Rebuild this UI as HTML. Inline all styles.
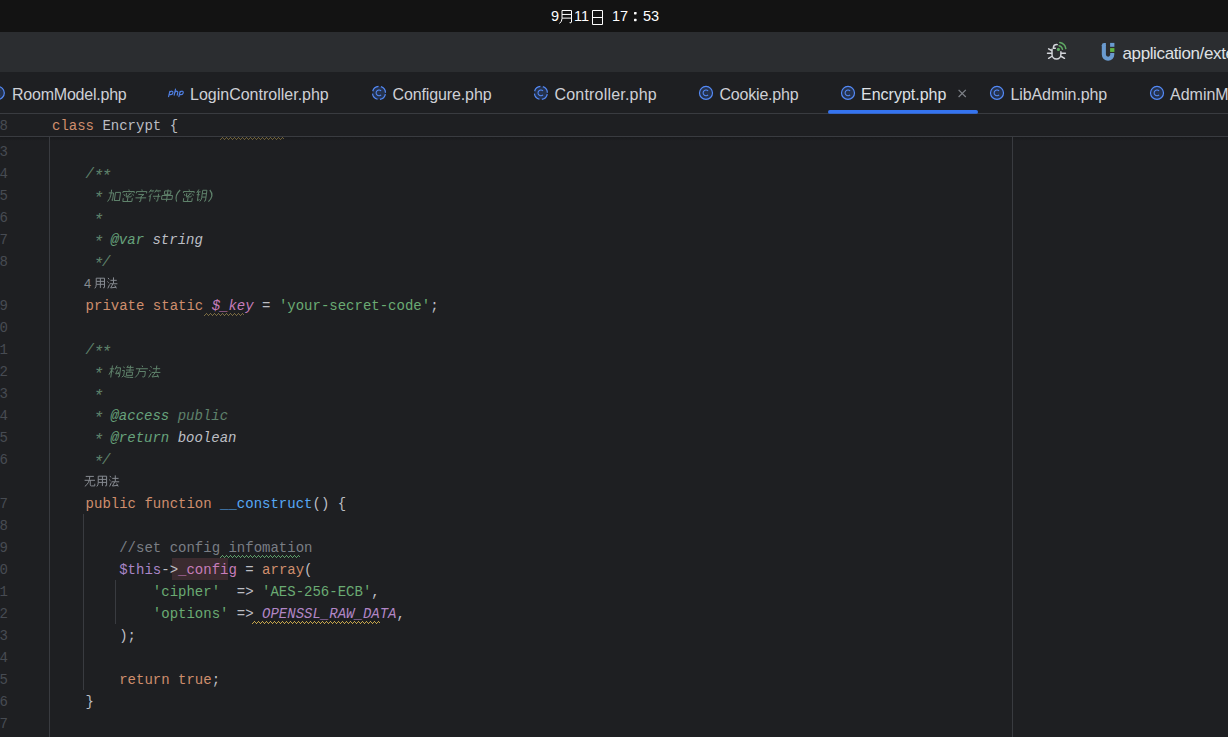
<!DOCTYPE html>
<html><head><meta charset="utf-8">
<style>
*{margin:0;padding:0;box-sizing:border-box}
html,body{width:1228px;height:737px;overflow:hidden;background:#1E1F22}
body{position:relative;font-family:"Liberation Sans",sans-serif}
.abs{position:absolute}
.cg{position:absolute;overflow:visible}
#topbar{left:0;top:0;width:1228px;height:32px;background:#131313}
.clk{position:absolute;top:6px;font-size:14.5px;line-height:20px;color:#FFFFFF;white-space:nowrap}
#toolbar{left:0;top:32px;width:1228px;height:40px;background:#2B2D30}
#tabs{left:0;top:72px;width:1228px;height:42px;background:#1E1F22;border-bottom:1px solid #393B40}
.tab{position:absolute;top:15px;font-size:16px;line-height:16px;color:#CED0D6;white-space:nowrap}
.tab.sel{color:#DFE1E5}
#sticky{left:0;top:114px;width:1228px;height:23px;border-bottom:1px solid #393B40;background:#1E1F22}
.code{font-family:"Liberation Mono",monospace;font-size:14px;line-height:22px;color:#BCBEC4;white-space:pre}
.row{position:absolute;left:0;height:22px;width:1228px}
.ln{position:absolute;left:-0.5px;top:1px;width:8px;color:#474B52}
.tx{position:absolute;left:52px;top:1px}
.k{color:#CF8E6D}.s{color:#6AAB73}.dc{color:#5F826B;font-style:italic}.dt{color:#67A37C;font-style:italic}
.dv{color:#BCBEC4;font-style:italic}.lc{color:#7A7E85}.fn{color:#56A8F5}.pv{color:#C77DBB}.pth{color:#A986C8}.pci{color:#B286C6;font-style:italic}.pvi{color:#C77DBB;font-style:italic}
.ast{display:inline-block;width:8px;transform:translateY(2.5px) scale(1.2)}
.guide{position:absolute;width:1px;background:#393B40}
.inl{position:absolute;font-family:"Liberation Sans",sans-serif;font-size:13px;line-height:22px;color:#868A91}
</style></head><body>
<svg width="0" height="0" style="position:absolute"><defs><g id="g52a0"><path d="M6,30 H42 V86 L34,82 M24,6 V46 Q22,74 6,94 M56,26 V90 M56,26 H94 V90 M56,86 H94" vector-effect="non-scaling-stroke"/></g><g id="g5bc6"><path d="M49,0 L53,10 M10,28 V16 H90 V28 M18,36 L26,50 M36,28 V52 Q36,58 44,58 H70 L74,48 M72,26 L38,60 M54,30 L58,38 M80,34 L88,48 M18,68 V94 H82 V68 M50,62 V94" vector-effect="non-scaling-stroke"/></g><g id="g5b57"><path d="M49,0 L53,10 M8,30 V16 H92 V30 M26,38 H72 L52,52 M52,50 V90 Q52,96 40,92 M6,64 H94" vector-effect="non-scaling-stroke"/></g><g id="g7b26"><path d="M20,2 L8,26 M14,13 H44 M28,16 L34,24 M62,2 L50,26 M56,13 H94 M72,16 L78,24 M30,34 L10,62 M21,50 V98 M40,56 H96 M80,36 V92 Q80,98 68,94 M52,68 L60,80" vector-effect="non-scaling-stroke"/></g><g id="g4e32"><path d="M26,12 V40 H74 V12 Z M10,50 V82 H90 V50 Z M50,0 V100" vector-effect="non-scaling-stroke"/></g><g id="g94a5"><path d="M22,4 L8,30 M12,22 H40 M10,44 H36 M23,24 V90 L40,80 M56,10 V66 Q56,86 44,96 M56,10 H92 V90 Q92,96 80,92 M56,36 H92 M56,62 H92" vector-effect="non-scaling-stroke"/></g><g id="g6784"><path d="M4,30 H40 M22,4 V98 M22,36 L4,76 M24,42 L40,58 M60,4 L48,36 M55,22 H92 V88 Q92,96 80,92 M70,36 L58,70 L84,66 M76,54 L86,74" vector-effect="non-scaling-stroke"/></g><g id="g9020"><path d="M10,12 L20,24 M4,42 H22 V78 L8,92 M22,82 Q34,94 98,94 M46,4 L38,22 M40,18 H90 M34,38 H96 M65,4 V50 M42,54 V80 M42,54 H88 V80 M42,78 H88" vector-effect="non-scaling-stroke"/></g><g id="g65b9"><path d="M48,0 L54,12 M4,26 H96 M34,26 Q34,76 8,96 M32,48 H80 V86 Q80,96 62,90" vector-effect="non-scaling-stroke"/></g><g id="g6cd5"><path d="M10,8 L20,20 M4,38 L16,48 M8,94 L24,62 M32,28 H90 M60,4 V54 M26,56 H96 M54,58 L34,90 L86,84 M72,70 L86,94" vector-effect="non-scaling-stroke"/></g><g id="g7528"><path d="M18,8 V64 Q18,86 6,98 M18,8 H88 V88 Q88,96 76,92 M18,36 H88 M18,62 H88 M53,8 V94" vector-effect="non-scaling-stroke"/></g><g id="g65e0"><path d="M14,14 H86 M4,46 H96 M50,14 Q48,70 6,96 M54,46 V84 Q54,92 64,92 H94 V74" vector-effect="non-scaling-stroke"/></g><g id="g6708"><path d="M24,6 V62 Q24,84 8,98 M24,6 H84 V88 Q84,96 72,92 M24,34 H84 M24,60 H84" vector-effect="non-scaling-stroke"/></g><g id="g65e5"><path d="M18,6 V94 M18,6 H82 V94 M18,50 H82 M18,94 H82" vector-effect="non-scaling-stroke"/></g></defs></svg>
<div id="topbar" class="abs">
  <div class="clk" style="left:551px">9</div>
  <div class="clk" style="left:574px">11</div>
  <div class="clk" style="left:612px">17</div>
  <svg class="abs" style="left:630px;top:8px" width="10" height="16" viewBox="630 8 10 16"><rect x="634" y="12" width="2.6" height="2.4" rx="0.6" fill="#fff"/><rect x="634" y="18.8" width="2.6" height="2.4" rx="0.6" fill="#fff"/></svg>
  <div class="clk" style="left:643px">53</div>
</div>
<div id="toolbar" class="abs">
  <svg class="abs" style="left:1040px;top:0" width="188" height="40" viewBox="1040 32 188 40">
    <g fill="none" stroke="#D5D7DC" stroke-width="1.45" stroke-linecap="round">
      <path d="M1052,49.2 V54.6 A4.45,4.45 0 0 0 1060.9,54.6 V51.6"/>
      <path d="M1057.3,44.6 C1055,44.5 1053.5,45.6 1053.4,47.4 V48.3 H1055.3"/>
      <path d="M1048.6,48.8 L1051.6,50.5 M1047.5,53.3 H1051.6 M1048.6,58.3 L1051.6,56.5 M1061.4,53.3 H1065.4 M1061.4,56.5 L1064.5,58.3"/>
    </g>
    <circle cx="1058.4" cy="49.4" r="1.6" fill="#5FA863"/>
    <g fill="none" stroke="#5FA863" stroke-width="1.5" stroke-linecap="round">
      <path d="M1059.1,45.7 A4.4,4.4 0 0 1 1062.5,49.3"/>
      <path d="M1059.8,42.6 A7.4,7.4 0 0 1 1065.8,48.6"/>
    </g>
    <path d="M1103.85,45 V54.55 A4.2,4.2 0 0 0 1112.25,54.55 V53" fill="none" stroke="#6A9BD0" stroke-width="4.1"/>
    <path d="M1101.8,45.2 Q1101.8,42.9 1104.2,42.9 H1105.9 V46 H1101.8 Z" fill="#6A9BD0"/>
    <rect x="1110.1" y="42.9" width="4.3" height="3.9" fill="#6A9BD0"/>
    <rect x="1110.1" y="48.1" width="4.3" height="3.8" fill="#62B543"/>
  </svg>
  <div class="abs" style="left:1122.5px;top:13.5px;font-size:17px;line-height:16px;letter-spacing:-0.38px;color:#DFE1E5;white-space:nowrap">application/extend</div>
</div>
<div id="tabs" class="abs">
  <svg class="abs" style="left:0;top:0" width="1228" height="42" viewBox="0 72 1228 42">
    <defs>
      <g id="cls"><circle r="6.5" fill="#25324D" stroke="#548AF7" stroke-width="1.2"/><path d="M2.1,-1.9 A2.85,2.85 0 1 0 2.1,1.9" fill="none" stroke="#548AF7" stroke-width="1.05"/></g>
      <g id="clsd"><circle r="6.5" fill="#25324D" stroke="#548AF7" stroke-width="1.2" stroke-dasharray="7.7 2.5" stroke-dashoffset="-1.25"/><path d="M2.1,-1.9 A2.85,2.85 0 1 0 2.1,1.9" fill="none" stroke="#548AF7" stroke-width="1.05"/></g>
    </defs>
    <use href="#cls" x="-2.2" y="92.9"/>
    <use href="#clsd" x="379" y="92.9"/>
    <use href="#clsd" x="540.9" y="92.9"/>
    <use href="#cls" x="706" y="92.9"/>
    <use href="#cls" x="848" y="92.9"/>
    <use href="#cls" x="997" y="92.9"/>
    <use href="#cls" x="1157" y="92.9"/>
    <path d="M958.6,89.8 L965.8,97 M965.8,89.8 L958.6,97" stroke="#7E8188" stroke-width="1.2"/>
    <rect x="828" y="110" width="150" height="3.8" rx="1.9" fill="#3574F0"/>
  </svg>
  <svg class="abs" style="left:160px;top:12px" width="30" height="20" viewBox="160 84 30 20"><g fill="none" stroke="#4F7FE3" stroke-width="1.15" stroke-linecap="round">
<path d="M169.8,91.3 L168.6,96.6 M169.5,92.6 Q170.6,91.1 172,91.2 Q173.2,91.4 172.9,92.8 Q172.5,94.7 170.6,94.6 Q169.6,94.5 169.2,94.1"/>
<path d="M175.5,89.1 L174.2,95.2 M174.9,92.4 Q175.9,91.1 177.1,91.2 Q178,91.4 177.8,92.4 L177.2,95.2"/>
<path d="M180.1,91.3 L178.9,96.6 M179.8,92.6 Q180.9,91.1 182.3,91.2 Q183.5,91.4 183.2,92.8 Q182.8,94.7 180.9,94.6 Q179.9,94.5 179.5,94.1"/>
</g></svg>
  <div class="tab" style="left:12px;letter-spacing:-0.22px">RoomModel.php</div>
  <div class="tab" style="left:190px">LoginController.php</div>
  <div class="tab" style="left:392.5px;letter-spacing:-0.12px">Configure.php</div>
  <div class="tab" style="left:554.5px;letter-spacing:0.2px">Controller.php</div>
  <div class="tab" style="left:719.5px;letter-spacing:-0.2px">Cookie.php</div>
  <div class="tab sel" style="left:861px">Encrypt.php</div>
  <div class="tab" style="left:1010.5px;letter-spacing:-0.1px">LibAdmin.php</div>
  <div class="tab" style="left:1170px">AdminModel.php</div>
</div>
<div id="sticky" class="abs code">
  <div class="ln" style="top:1px">8</div>
  <div class="tx" style="top:1px"><span class="k">class</span> Encrypt {</div>
</div>
<div class="abs" style="left:0;top:137px;width:1228px;height:4px;background:linear-gradient(#191A1D,#1E1F22)"></div>
<div class="guide" style="left:49px;top:137px;height:600px"></div>
<div class="guide" style="left:83px;top:514px;height:176px"></div>
<div class="guide" style="left:115px;top:580px;height:44px"></div>
<div class="guide" style="left:1012px;top:137px;height:600px"></div>
<div class="abs" style="left:172px;top:558px;width:56px;height:22px;background:#3B2B2F"></div>

<div id="editor" class="abs code" style="left:0;top:0;width:1228px;height:737px">
<div class="row" style="top:140px"><div class="ln">3</div><div class="tx"></div></div>
<div class="row" style="top:162px"><div class="ln">4</div><div class="tx"><span class="dc">    /<span class="ast">*</span><span class="ast">*</span></span></div></div>
<div class="row" style="top:184px"><div class="ln">5</div><div class="tx"><span class="dc">     <span class="ast">*</span> </span></div></div>
<div class="row" style="top:206px"><div class="ln">6</div><div class="tx"><span class="dc">     <span class="ast">*</span></span></div></div>
<div class="row" style="top:228px"><div class="ln">7</div><div class="tx"><span class="dc">     <span class="ast">*</span> </span><span class="dt">@var</span><span class="dc"> </span><span class="dv">string</span></div></div>
<div class="row" style="top:250px"><div class="ln">8</div><div class="tx"><span class="dc">     <span class="ast">*</span>/</span></div></div>
<div class="row" style="top:294px"><div class="ln">9</div><div class="tx">    <span class="k">private</span> <span class="k">static</span> <span class="pvi">$_key</span> = <span class="s">&#x27;your-secret-code&#x27;</span>;</div></div>
<div class="row" style="top:316px"><div class="ln">0</div><div class="tx"></div></div>
<div class="row" style="top:338px"><div class="ln">1</div><div class="tx"><span class="dc">    /<span class="ast">*</span><span class="ast">*</span></span></div></div>
<div class="row" style="top:360px"><div class="ln">2</div><div class="tx"><span class="dc">     <span class="ast">*</span> </span></div></div>
<div class="row" style="top:382px"><div class="ln">3</div><div class="tx"><span class="dc">     <span class="ast">*</span></span></div></div>
<div class="row" style="top:404px"><div class="ln">4</div><div class="tx"><span class="dc">     <span class="ast">*</span> </span><span class="dt">@access</span><span class="dc"> public</span></div></div>
<div class="row" style="top:426px"><div class="ln">5</div><div class="tx"><span class="dc">     <span class="ast">*</span> </span><span class="dt">@return</span><span class="dc"> </span><span class="dv">boolean</span></div></div>
<div class="row" style="top:448px"><div class="ln">6</div><div class="tx"><span class="dc">     <span class="ast">*</span>/</span></div></div>
<div class="row" style="top:492px"><div class="ln">7</div><div class="tx">    <span class="k">public</span> <span class="k">function</span> <span class="fn">__construct</span>() {</div></div>
<div class="row" style="top:514px"><div class="ln">8</div><div class="tx"></div></div>
<div class="row" style="top:536px"><div class="ln">9</div><div class="tx">        <span class="lc">//set config infomation</span></div></div>
<div class="row" style="top:558px"><div class="ln">0</div><div class="tx">        <span class="pth">$this</span>-&gt;<span class="pv">_config</span> = <span class="k">array</span>(</div></div>
<div class="row" style="top:580px"><div class="ln">1</div><div class="tx">            <span class="s">&#x27;cipher&#x27;</span>  =&gt; <span class="s">&#x27;AES-256-ECB&#x27;</span>,</div></div>
<div class="row" style="top:602px"><div class="ln">2</div><div class="tx">            <span class="s">&#x27;options&#x27;</span> =&gt; <span class="pci">OPENSSL_RAW_DATA</span>,</div></div>
<div class="row" style="top:624px"><div class="ln">3</div><div class="tx">        );</div></div>
<div class="row" style="top:646px"><div class="ln">4</div><div class="tx"></div></div>
<div class="row" style="top:668px"><div class="ln">5</div><div class="tx">        <span class="k">return</span> <span class="k">true</span>;</div></div>
<div class="row" style="top:690px"><div class="ln">6</div><div class="tx">    }</div></div>
<div class="row" style="top:712px"><div class="ln">7</div><div class="tx"></div></div>
</div>
<svg class="cg" style="left:170px;top:184px;width:50px;height:22px" viewBox="170 184 50 22"><path d="M180.2,190 Q174.4,195.2 176.6,201.6 M209.8,190 Q214.6,195.6 208.4,201.6" fill="none" stroke="#5F826B" stroke-width="1.2"/></svg>
<div class="inl" style="left:84px;top:273px">4</div>
<svg class="abs" style="left:0;top:0" width="1228" height="737"><pattern id="sq1" x="220" y="137" width="4" height="3" patternUnits="userSpaceOnUse"><rect x="0" y="2" width="1" height="1" fill="#6E6038"/><rect x="1" y="1" width="1" height="1" fill="#6E6038"/><rect x="2" y="0" width="1" height="1" fill="#6E6038"/><rect x="3" y="1" width="1" height="1" fill="#6E6038"/></pattern><rect x="220" y="137" width="64" height="3" fill="url(#sq1)"/><pattern id="sq2" x="204" y="313" width="4" height="3" patternUnits="userSpaceOnUse"><rect x="0" y="2" width="1" height="1" fill="#7A6B42"/><rect x="1" y="1" width="1" height="1" fill="#7A6B42"/><rect x="2" y="0" width="1" height="1" fill="#7A6B42"/><rect x="3" y="1" width="1" height="1" fill="#7A6B42"/></pattern><rect x="204" y="313" width="40" height="3" fill="url(#sq2)"/><pattern id="sq3" x="220" y="555" width="4" height="3" patternUnits="userSpaceOnUse"><rect x="0" y="2" width="1" height="1" fill="#5E9E6A"/><rect x="1" y="1" width="1" height="1" fill="#5E9E6A"/><rect x="2" y="0" width="1" height="1" fill="#5E9E6A"/><rect x="3" y="1" width="1" height="1" fill="#5E9E6A"/></pattern><rect x="220" y="555" width="80" height="3" fill="url(#sq3)"/><pattern id="sq4" x="252" y="621" width="4" height="3" patternUnits="userSpaceOnUse"><rect x="0" y="2" width="1" height="1" fill="#C5A54C"/><rect x="1" y="1" width="1" height="1" fill="#C5A54C"/><rect x="2" y="0" width="1" height="1" fill="#C5A54C"/><rect x="3" y="1" width="1" height="1" fill="#C5A54C"/></pattern><rect x="252" y="621" width="128" height="3" fill="url(#sq4)"/></svg><svg class="abs" style="left:0;top:0" width="1228" height="737"><use href="#g52a0" transform="translate(114.25,195.65) skewX(-8) translate(-114.25,-195.65) translate(107.602,188.889) scale(0.1330,0.1352)" fill="none" stroke="#5F826B" stroke-width="1.0"/><use href="#g5bc6" transform="translate(128.15,195.50) skewX(-8) translate(-128.15,-195.50) translate(121.088,189.500) scale(0.1413,0.1277)" fill="none" stroke="#5F826B" stroke-width="1.0"/><use href="#g5b57" transform="translate(141.15,195.50) skewX(-8) translate(-141.15,-195.50) translate(135.070,189.500) scale(0.1216,0.1304)" fill="none" stroke="#5F826B" stroke-width="1.0"/><use href="#g7b26" transform="translate(154.60,195.50) skewX(-8) translate(-154.60,-195.50) translate(147.627,189.250) scale(0.1341,0.1250)" fill="none" stroke="#5F826B" stroke-width="1.0"/><use href="#g4e32" transform="translate(167.25,195.50) skewX(-8) translate(-167.25,-195.50) translate(160.688,189.500) scale(0.1313,0.1200)" fill="none" stroke="#5F826B" stroke-width="1.0"/><use href="#g5bc6" transform="translate(188.35,195.50) skewX(-8) translate(-188.35,-195.50) translate(181.662,189.500) scale(0.1337,0.1277)" fill="none" stroke="#5F826B" stroke-width="1.0"/><use href="#g94a5" transform="translate(201.30,195.50) skewX(-8) translate(-201.30,-195.50) translate(195.467,188.978) scale(0.1167,0.1304)" fill="none" stroke="#5F826B" stroke-width="1.0"/><use href="#g6784" transform="translate(114.75,371.50) skewX(-8) translate(-114.75,-371.50) translate(108.914,364.989) scale(0.1216,0.1277)" fill="none" stroke="#5F826B" stroke-width="1.0"/><use href="#g9020" transform="translate(128.00,371.50) skewX(-8) translate(-128.00,-371.50) translate(121.489,364.967) scale(0.1277,0.1333)" fill="none" stroke="#5F826B" stroke-width="1.0"/><use href="#g65b9" transform="translate(141.50,371.50) skewX(-8) translate(-141.50,-371.50) translate(134.978,365.500) scale(0.1304,0.1250)" fill="none" stroke="#5F826B" stroke-width="1.0"/><use href="#g6cd5" transform="translate(154.75,371.50) skewX(-8) translate(-154.75,-371.50) translate(148.500,364.967) scale(0.1250,0.1333)" fill="none" stroke="#5F826B" stroke-width="1.0"/><use href="#g7528" transform="translate(94.090,277.293) scale(0.1183,0.1133)" fill="none" stroke="#868A91" stroke-width="1.0"/><use href="#g6cd5" transform="translate(106.965,276.911) scale(0.1087,0.1222)" fill="none" stroke="#868A91" stroke-width="1.0"/><use href="#g65e0" transform="translate(84.148,474.693) scale(0.1130,0.1220)" fill="none" stroke="#868A91" stroke-width="1.0"/><use href="#g7528" transform="translate(96.083,475.284) scale(0.1195,0.1144)" fill="none" stroke="#868A91" stroke-width="1.0"/><use href="#g6cd5" transform="translate(108.765,474.907) scale(0.1087,0.1233)" fill="none" stroke="#868A91" stroke-width="1.0"/><use href="#g6708" transform="translate(558.237,9.652) scale(0.1579,0.1413)" fill="none" stroke="#FFFFFF" stroke-width="1.0"/><use href="#g65e5" transform="translate(589.688,9.545) scale(0.1562,0.1591)" fill="none" stroke="#FFFFFF" stroke-width="1.0"/></svg>
</body></html>
